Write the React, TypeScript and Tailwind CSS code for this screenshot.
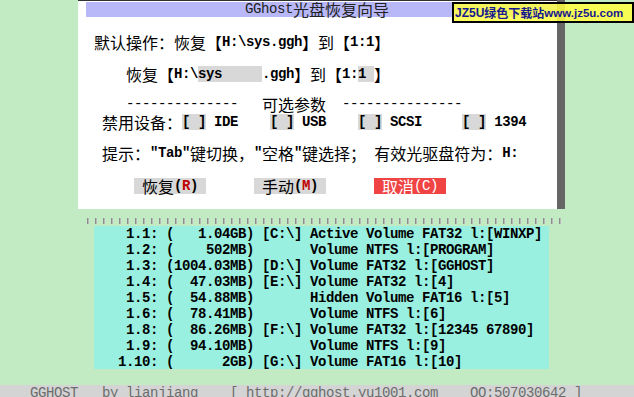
import type { ReactNode } from "react";

const mono =
  "font-['Liberation_Mono',monospace] text-[14px] tracking-[-0.4px] font-bold leading-4 whitespace-pre";
const cjk = "font-['Noto_Sans_CJK_SC',sans-serif] text-[16px] leading-4 whitespace-pre";

const CJK_RE = /([\u2e80-\u9fff\u3000-\u303f\uff00-\uffef]+)/;

function M({ children, className = "" }: { children: ReactNode; className?: string }) {
  return <span className={`${mono} ${className}`}>{children}</span>;
}

function C({ children, className = "" }: { children: ReactNode; className?: string }) {
  return <span className={`${cjk} ${className}`}>{children}</span>;
}

// splits a string into latin (8px cell) and CJK (16px cell) runs
function T({ s }: { s: string }) {
  const parts = s.split(CJK_RE).filter(Boolean);
  return (
    <>
      {parts.map((p, i) => (CJK_RE.test(p) ? <C key={i}>{p}</C> : <M key={i}>{p}</M>))}
    </>
  );
}

const partitions = [
  " 1.1: (   1.04GB) [C:\\] Active Volume FAT32 l:[WINXP]",
  " 1.2: (    502MB)       Volume NTFS l:[PROGRAM]",
  " 1.3: (1004.03MB) [D:\\] Volume FAT32 l:[GGHOST]",
  " 1.4: (  47.03MB) [E:\\] Volume FAT32 l:[4]",
  " 1.5: (  54.88MB)       Hidden Volume FAT16 l:[5]",
  " 1.6: (  78.41MB)       Volume NTFS l:[6]",
  " 1.8: (  86.26MB) [F:\\] Volume FAT32 l:[12345 67890]",
  " 1.9: (  94.10MB)       Volume NTFS l:[9]",
  "1.10: (      2GB) [G:\\] Volume FAT16 l:[10]",
];

function Button({ label, hot, danger }: { label: string; hot: string; danger?: boolean }) {
  return (
    <div className={`flex h-4 w-[72px] px-2 ${danger ? "bg-[#f04444] text-white" : "bg-[#d8d8d8] text-black"}`}>
      <C>{label}</C>
      <M className={danger ? "font-normal" : ""}>(</M>
      <M className={danger ? "font-normal" : "text-[#c00000]"}>{hot}</M>
      <M className={danger ? "font-normal" : ""}>)</M>
    </div>
  );
}

export default function App() {
  return (
    <div className="relative h-[397px] w-[634px] overflow-hidden bg-[#c3ebc3] text-black">
      {/* dialog + shadow */}
      <div className="ml-[78px] flex">
        <div className="flex h-[209px] w-[479px] flex-col border-t border-[#303030] bg-white">
          <div className="ml-2 mt-px flex h-[15px] items-center justify-center bg-[#b8b8f8] pr-[9px] text-[#222]">
            <M className="font-normal leading-[15px]">GGhost</M>
            <C className="leading-[15px]">光盘恢复向导</C>
          </div>

          <div className="mt-[17px] flex h-4 pl-4">
            <T s={"默认操作：恢复【H:\\sys.ggh】到【1:1】"} />
          </div>

          <div className="mt-4 flex h-4 pl-12">
            <C>恢复【</C>
            <M>H:\</M>
            <M className="bg-[#d8d8d8]">{"sys     "}</M>
            <M>.ggh</M>
            <C>】到【</C>
            <M>1:</M>
            <M className="bg-[#d8d8d8]">{"1 "}</M>
            <C>】</C>
          </div>

          <div className="mt-[14px] flex h-4 pl-12">
            <M className="font-normal">{"--------------   "}</M>
            <C>可选参数</C>
            <M className="font-normal">{"  ---------------"}</M>
          </div>

          <div className="mt-[2px] flex h-4 pl-6">
            <C>禁用设备：</C>
            <M className="bg-[#d8d8d8]">[ ]</M>
            <M>{" IDE    "}</M>
            <M className="bg-[#d8d8d8]">[ ]</M>
            <M>{" USB    "}</M>
            <M className="bg-[#d8d8d8]">[ ]</M>
            <M>{" SCSI     "}</M>
            <M className="bg-[#d8d8d8]">[ ]</M>
            <M>{" 1394"}</M>
          </div>

          <div className="mt-[15px] flex h-4 pl-6">
            <T s={'提示："Tab"键切换，"空格"键选择； 有效光驱盘符为：H:'} />
          </div>

          <div className="mt-[17px] flex gap-12 pl-14">
            <Button label="恢复" hot="R" />
            <Button label="手动" hot="M" />
            <Button label="取消" hot="C" danger />
          </div>
        </div>
        <div className="h-[209px] w-2 bg-[#666666]" />
      </div>

      {/* dotted separator */}
      <div className="ml-[87px] mt-[9px] h-[6px] w-[478px] bg-[repeating-linear-gradient(90deg,#8c8c8c_0_1px,#b8b8b8_1px_2px,transparent_2px_8px)]" />

      {/* partition list */}
      <div className="ml-[94px] mt-[3px] h-[143px] w-[455px] bg-[#99f0e0] pl-6">
        <div className="-mt-px flex flex-col">
          {partitions.map((p) => (
            <div key={p} className="flex h-4">
              <M>{p}</M>
            </div>
          ))}
        </div>
      </div>

      {/* status bar */}
      <div className="mt-4 flex h-4 bg-[#d4d4d4] pl-[6px] text-[#6c6c6c]">
        <M className="font-normal">
          {"   GGHOST   by lianjiang    [ http://gghost.yu1001.com    QQ:507030642 ]"}
        </M>
      </div>

      {/* watermark */}
      <div className="absolute left-[452px] top-[2px] flex h-[21px] w-[182px] items-center whitespace-nowrap border-2 border-black bg-[#ffff40]/85 pl-px text-[#18188f]">
        <span className="font-['Liberation_Sans',sans-serif] text-[12px] font-bold leading-4">JZ5U</span>
        <span className="font-['Noto_Sans_CJK_SC',sans-serif] text-[12px] font-bold leading-4">绿色下载站</span>
        <span className="font-['Liberation_Sans',sans-serif] text-[11.5px] font-bold leading-4">www.jz5u.com</span>
      </div>
    </div>
  );
}
